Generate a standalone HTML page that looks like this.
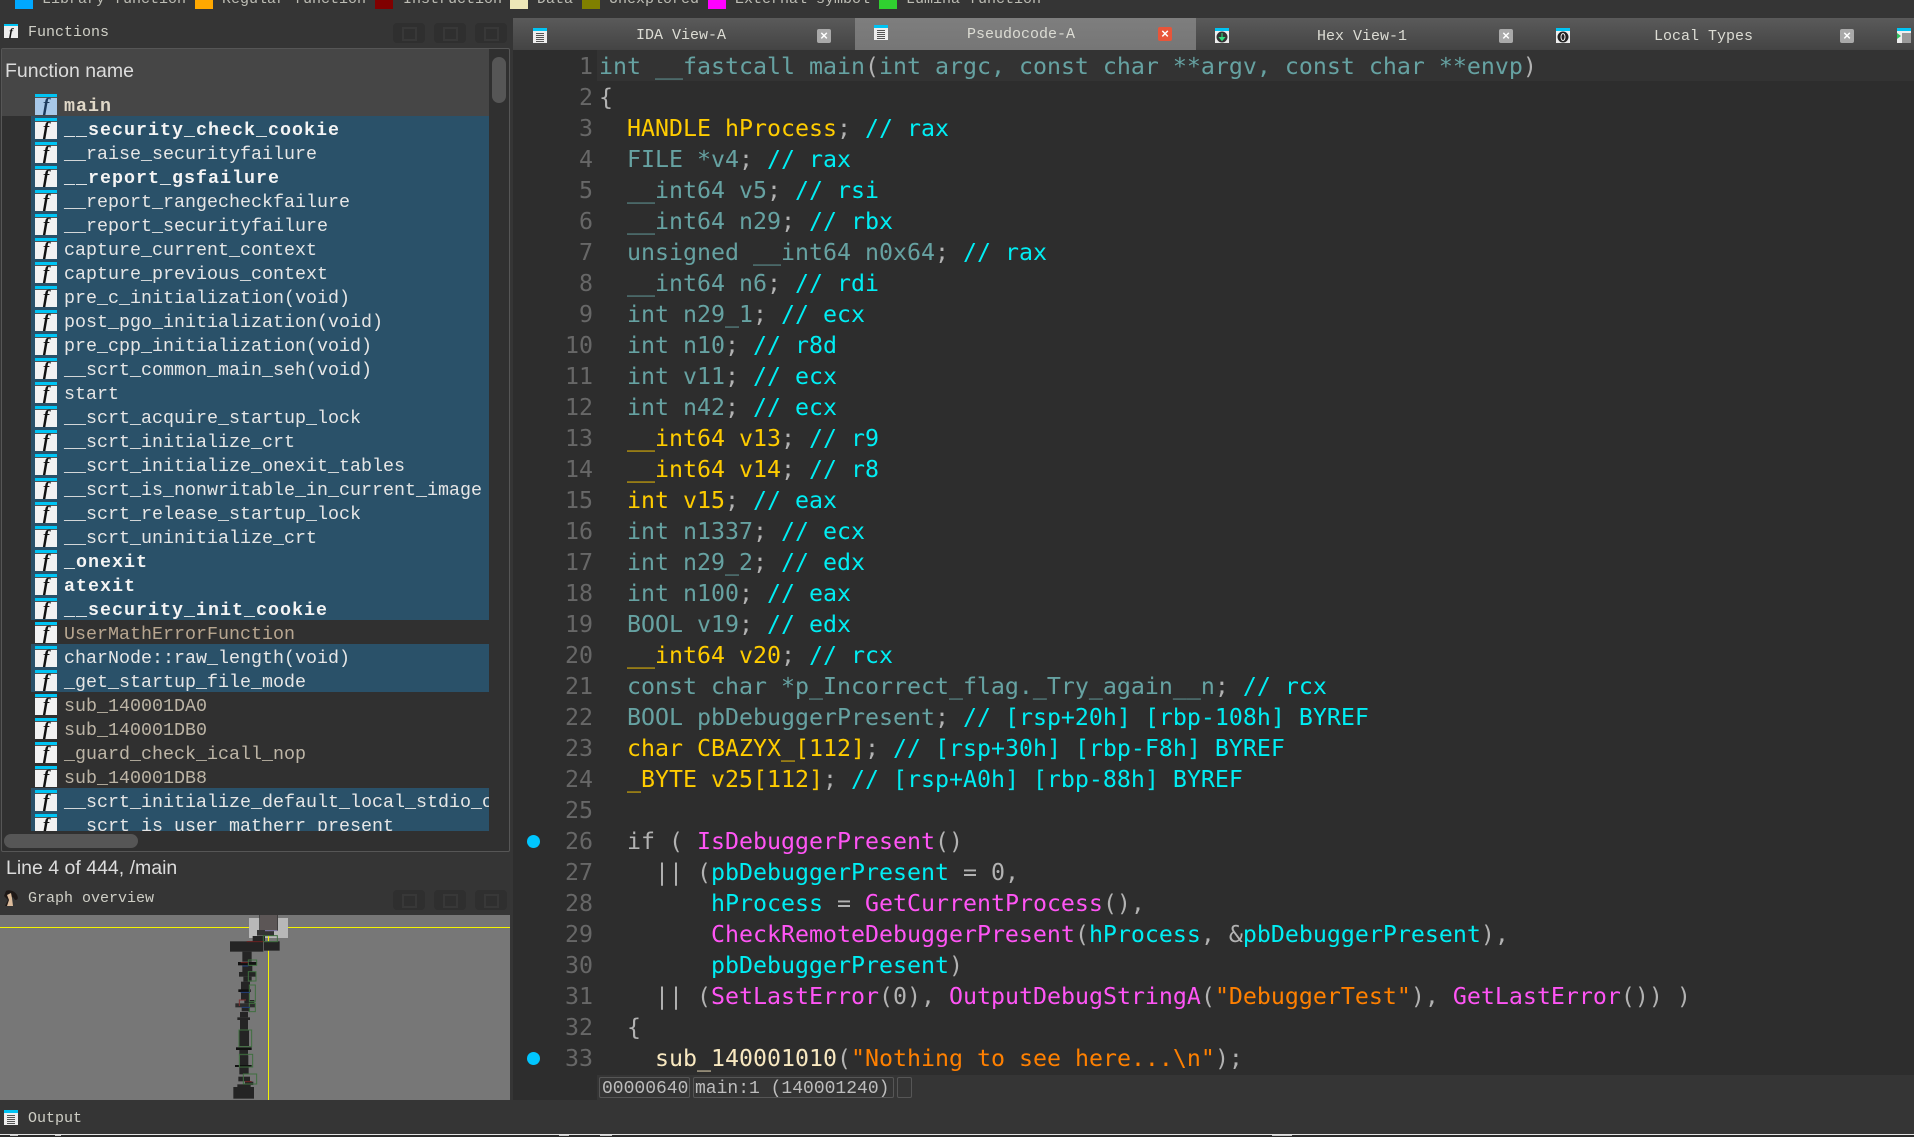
<!DOCTYPE html>
<html lang="en"><head><meta charset="utf-8"><title>IDA Pseudocode</title>
<style>
html,body{margin:0;padding:0;background:#353535;width:1914px;height:1137px;overflow:hidden}
body{position:relative;font-family:"Liberation Mono",monospace;color:#c8c8c0}
.a{position:absolute}
.sw{position:absolute;top:0;width:18px;height:9px}
.lg{position:absolute;top:-8px;font-size:15px;line-height:16px;white-space:pre;color:#bdbdb5}
.ttl{position:absolute;font-size:15px;line-height:18px;white-space:pre;color:#cfcfc6}
.tb{position:absolute;width:32px;height:20px;background:#2f2f2f;border-radius:4px}
.tb:after{content:"";position:absolute;left:9px;top:4px;width:11px;height:10px;border:2px solid #383838}
.list{position:absolute;left:2px;top:92px;width:487px;height:739px;overflow:hidden;background:#303030;font-size:18.33px}
.r{height:24px;line-height:29px;position:relative;padding-left:62px;white-space:pre;color:#bdb5a6}
.s{background:linear-gradient(#2a5169,#2a5169) 29px 0/458px 100% no-repeat;color:#e6e6e6}
.b{font-weight:bold;color:#f4f4f4;letter-spacing:1px}
.ic{position:absolute;left:33px;top:2px;width:22px;height:21px;background:#f2f2f2;border-top:3px solid #00c4f4;box-sizing:border-box;box-shadow:inset 0 1px 0 #555}
.ic i{position:absolute;left:0;right:0;top:-1px;text-align:center;font:italic bold 19px/20px "Liberation Serif",serif;color:#111;letter-spacing:0}
.m .ic{background:#a8c8e8}
.m .ic i{color:#1c3a5c}
.tab{position:absolute;top:18px;height:32px}
.tt{position:absolute;font-size:15px;line-height:18px;top:27px;color:#dcdcd4;white-space:pre}
.x{position:absolute;width:14px;height:14px;background:#a9a9a9;border-radius:2px;color:#fff;font:bold 13px/14px "Liberation Sans",sans-serif;text-align:center}
.code,.ln{position:absolute;top:51px;font-family:"DejaVu Sans Mono",monospace;font-size:23.25px;line-height:31px;white-space:pre}
.ln{left:513px;width:80px;text-align:right;color:#676767}
.code{left:599px;color:#66a2a2}
.y{color:#ffcc00}.c{color:#00eef4}.p{color:#b2b2b2}.m2{color:#ff55f5}.o{color:#ff8000}.w{color:#f8e8c0}
.dot{position:absolute;left:527px;width:13px;height:13px;border-radius:50%;background:#00c6ff}
.st{position:absolute;top:1077px;height:21px;border:1px solid #565656;border-radius:2px;box-sizing:border-box;font-size:18px;line-height:22px;padding-left:2px;white-space:pre;color:#bdbdbd}
svg{position:absolute;display:block}
</style></head><body>

<svg width="0" height="0" style="position:absolute"><defs>
<symbol id="doc" viewBox="0 0 14 15"><rect x="0" y="0" width="14" height="3" fill="#00c4f4"/><rect x="0" y="3" width="14" height="12" fill="#eee"/><rect x="3" y="5" width="8" height="9" fill="#555"/><path d="M3 6.5h8M3 8.5h8M3 10.500h8M3 12.500h8" stroke="#eee" stroke-width="1"/></symbol>
</defs></svg>

<!-- legend -->
<div class="sw" style="left:15px;background:#00a8ff"></div><div class="lg" style="left:42px">Library function</div>
<div class="sw" style="left:195px;background:#ffa800"></div><div class="lg" style="left:222px">Regular function</div>
<div class="sw" style="left:375px;background:#800000"></div><div class="lg" style="left:403px">Instruction</div>
<div class="sw" style="left:510px;background:#eee8b8"></div><div class="lg" style="left:537px">Data</div>
<div class="sw" style="left:582px;background:#808000"></div><div class="lg" style="left:609px">Unexplored</div>
<div class="sw" style="left:708px;background:#ff00ff"></div><div class="lg" style="left:735px">External symbol</div>
<div class="sw" style="left:879px;background:#30d030"></div><div class="lg" style="left:906px">Lumina function</div>

<!-- functions panel -->
<div class="a" style="left:4px;top:24px;width:14px;height:14px;background:#eee;border-top:2px solid #00c4f4;box-sizing:border-box;font:italic bold 12px/12px 'Liberation Serif',serif;color:#111;text-align:center">f</div>
<div class="ttl" style="left:28px;top:24px">Functions</div>
<div class="tb" style="left:393px;top:23px"></div><div class="tb" style="left:434px;top:23px"></div><div class="tb" style="left:475px;top:23px"></div>

<div class="a" style="left:1px;top:48px;width:509px;height:804px;border:1px solid #565656;box-sizing:border-box;background:#303030;border-radius:2px"></div>
<div class="a" style="left:2px;top:49px;width:487px;height:43px;background:#464646;font:19.500px/44px 'Liberation Sans',sans-serif;color:#dcdcdc;padding-left:3px;box-sizing:border-box">Function name</div>
<div class="a" style="left:492px;top:57px;width:14px;height:46px;background:#565656;border-radius:7px"></div>

<div class="list">
<div class="r m" style="background:#464646;color:#e0d8c8;font-weight:bold;letter-spacing:1px"><span class="ic"><i>f</i></span>main</div>
<div class="r s b"><span class="ic"><i>f</i></span>__security_check_cookie</div>
<div class="r s"><span class="ic"><i>f</i></span>__raise_securityfailure</div>
<div class="r s b"><span class="ic"><i>f</i></span>__report_gsfailure</div>
<div class="r s"><span class="ic"><i>f</i></span>__report_rangecheckfailure</div>
<div class="r s"><span class="ic"><i>f</i></span>__report_securityfailure</div>
<div class="r s"><span class="ic"><i>f</i></span>capture_current_context</div>
<div class="r s"><span class="ic"><i>f</i></span>capture_previous_context</div>
<div class="r s"><span class="ic"><i>f</i></span>pre_c_initialization(void)</div>
<div class="r s"><span class="ic"><i>f</i></span>post_pgo_initialization(void)</div>
<div class="r s"><span class="ic"><i>f</i></span>pre_cpp_initialization(void)</div>
<div class="r s"><span class="ic"><i>f</i></span>__scrt_common_main_seh(void)</div>
<div class="r s"><span class="ic"><i>f</i></span>start</div>
<div class="r s"><span class="ic"><i>f</i></span>__scrt_acquire_startup_lock</div>
<div class="r s"><span class="ic"><i>f</i></span>__scrt_initialize_crt</div>
<div class="r s"><span class="ic"><i>f</i></span>__scrt_initialize_onexit_tables</div>
<div class="r s"><span class="ic"><i>f</i></span>__scrt_is_nonwritable_in_current_image</div>
<div class="r s"><span class="ic"><i>f</i></span>__scrt_release_startup_lock</div>
<div class="r s"><span class="ic"><i>f</i></span>__scrt_uninitialize_crt</div>
<div class="r s b"><span class="ic"><i>f</i></span>_onexit</div>
<div class="r s b"><span class="ic"><i>f</i></span>atexit</div>
<div class="r s b"><span class="ic"><i>f</i></span>__security_init_cookie</div>
<div class="r" style="color:#b8a690"><span class="ic"><i>f</i></span>UserMathErrorFunction</div>
<div class="r s"><span class="ic"><i>f</i></span>charNode::raw_length(void)</div>
<div class="r s"><span class="ic"><i>f</i></span>_get_startup_file_mode</div>
<div class="r"><span class="ic"><i>f</i></span>sub_140001DA0</div>
<div class="r"><span class="ic"><i>f</i></span>sub_140001DB0</div>
<div class="r"><span class="ic"><i>f</i></span>_guard_check_icall_nop</div>
<div class="r"><span class="ic"><i>f</i></span>sub_140001DB8</div>
<div class="r s"><span class="ic"><i>f</i></span>__scrt_initialize_default_local_stdio_options</div>
<div class="r s"><span class="ic"><i>f</i></span>__scrt_is_user_matherr_present</div>
</div>
<div class="a" style="left:4px;top:834px;width:134px;height:14px;background:#565656;border-radius:7px"></div>

<div class="a" style="left:6px;top:857px;font:19.500px/22px 'Liberation Sans',sans-serif;color:#dcdcdc;white-space:pre">Line 4 of 444, /main</div>

<!-- graph overview -->
<svg style="left:3px;top:890px" width="16" height="16" viewBox="0 0 16 16"><path d="M3 1C6 -1 12 1 14 5 16 9 14 10 12 10L10 7 8 8 9 16 2 16 5 10 1 6Z" fill="#1e1816"/><path d="M4 5 8 3 9 8 10 16 4 16 6 10Z" fill="#dcbc9c"/></svg>
<div class="ttl" style="left:28px;top:890px">Graph overview</div>
<div class="tb" style="left:393px;top:890px"></div><div class="tb" style="left:434px;top:890px"></div><div class="tb" style="left:475px;top:890px"></div>

<div class="a" style="left:0;top:915px;width:510px;height:185px;background:#777"></div>
<div class="a" style="left:0;top:927px;width:510px;height:1px;background:#f4f400"></div>
<div class="a" style="left:249px;top:918px;width:39px;height:20px;background:#b8b8b8"></div>
<div class="a" style="left:268px;top:915px;width:1px;height:185px;background:#f4f400"></div>
<svg style="left:0;top:780px" width="520" height="357" viewBox="0 0 1560 1071">
<rect x="778" y="405" width="56" height="47" fill="#5c5656"/><rect x="778" y="405" width="2" height="47" fill="#333"/><rect x="832" y="405" width="2" height="47" fill="#333"/>
<g fill="#242424">
<rect x="771" y="450" width="51" height="17" fill="#333"/><rect x="758" y="468" width="37" height="17"/><rect x="690" y="484" width="100" height="31"/><rect x="792" y="484" width="47" height="28"/><rect x="727" y="515" width="28" height="30"/><rect x="714" y="546" width="56" height="10" fill="#111"/><rect x="727" y="556" width="30" height="20"/><rect x="717" y="576" width="50" height="14"/><rect x="730" y="590" width="25" height="15"/><rect x="723" y="605" width="27" height="25"/><rect x="715" y="628" width="37" height="8" fill="#111"/><rect x="723" y="636" width="25" height="24"/><rect x="733" y="660" width="30" height="10"/><rect x="706" y="670" width="60" height="12" fill="#2c2c2c"/><rect x="725" y="682" width="25" height="12"/><rect x="720" y="696" width="24" height="16"/><rect x="712" y="712" width="38" height="8"/><rect x="720" y="720" width="24" height="30"/><rect x="717" y="750" width="30" height="48"/><rect x="708" y="802" width="47" height="8" fill="#111"/><rect x="718" y="810" width="26" height="16"/><rect x="720" y="826" width="25" height="30"/><rect x="705" y="855" width="50" height="6" fill="#111"/><rect x="718" y="861" width="28" height="22"/><rect x="715" y="890" width="35" height="14"/><rect x="735" y="905" width="25" height="10"/><rect x="712" y="913" width="40" height="8"/><rect x="700" y="921" width="62" height="35"/>
</g>
<g fill="none" stroke="#3f6f3f" stroke-width="3">
<rect x="745" y="540" width="25" height="16"/><rect x="745" y="575" width="23" height="28"/><rect x="748" y="615" width="18" height="50"/><rect x="748" y="670" width="18" height="25"/><rect x="717" y="750" width="38" height="50"/><rect x="718" y="823" width="40" height="38"/><rect x="730" y="882" width="40" height="30"/><rect x="790" y="467" width="42" height="18"/>
</g>
<g fill="none" stroke-width="3"><path d="M740 485H790M722 548H745M735 905H755" stroke="#6a2020"/><path d="M727 558H745M722 637H750M725 682H750" stroke="#22407a"/><path d="M718 678V660H738" stroke="#803030"/><path d="M795 452H832" stroke="#8a80b0"/></g>
</svg>

<div class="a" style="left:4px;top:1110px;width:14px;height:15px"><svg width="14" height="15"><use href="#doc"/></svg></div>
<div class="ttl" style="left:28px;top:1110px">Output</div>

<!-- tabs -->
<div class="tab" style="left:513px;width:1401px;background:linear-gradient(#5a5a5a,#444)"></div>
<div class="tab" style="left:855px;width:341px;background:linear-gradient(#7e7e7e,#767676)"></div>
<svg style="left:533px;top:28px" width="14" height="15"><use href="#doc"/></svg>
<div class="tt" style="left:636px">IDA View-A</div>
<div class="x" style="left:817px;top:29px">×</div>
<svg style="left:874px;top:25px" width="14" height="15"><use href="#doc"/></svg>
<div class="tt" style="left:967px;top:26px">Pseudocode-A</div>
<div class="x" style="left:1158px;top:27px;background:#e8553a;border-radius:2px">×</div>
<svg style="left:1215px;top:28px" width="14" height="15" viewBox="0 0 14 15"><rect width="14" height="3" fill="#00c4f4"/><rect y="3" width="14" height="12" fill="#eee"/><circle cx="7" cy="9" r="5.500" fill="#333"/><path d="M7 5v7M4.500 9.500 7 12.500 9.500 9.500Z" stroke="#30e080" fill="#30e080"/></svg>
<div class="tt" style="left:1317px;top:28px">Hex View-1</div>
<div class="x" style="left:1499px;top:29px">×</div>
<svg style="left:1556px;top:28px" width="14" height="15" viewBox="0 0 14 15"><rect width="14" height="3" fill="#00c4f4"/><rect y="3" width="14" height="12" fill="#eee"/><circle cx="7" cy="9" r="5.500" fill="#222"/><ellipse cx="7" cy="9" rx="2" ry="3.500" fill="none" stroke="#eee"/></svg>
<div class="tt" style="left:1654px;top:28px">Local Types</div>
<div class="x" style="left:1840px;top:29px">×</div>
<svg style="left:1897px;top:28px" width="14" height="15" viewBox="0 0 14 15"><rect width="14" height="3" fill="#00c4f4"/><rect y="3" width="14" height="12" fill="#eee"/><path d="M0 5 4 8 0 11Z" fill="#30c060"/><path d="M5 6h9M5 8h9M5 10h9M5 12h9M5 14h9" stroke="#444"/></svg>

<!-- editor -->
<div class="a" style="left:513px;top:50px;width:84px;height:1050px;background:#2d2d2d"></div>
<div class="a" style="left:597px;top:50px;width:1317px;height:1025px;background:#2d2d2d"></div>
<div class="a" style="left:597px;top:50px;width:1317px;height:31px;background:#333"></div>

<div class="ln">1
2
3
4
5
6
7
8
9
10
11
12
13
14
15
16
17
18
19
20
21
22
23
24
25
26
27
28
29
30
31
32
33</div>
<div class="dot" style="top:835px"></div>
<div class="dot" style="top:1052px"></div>

<div class="code">int __fastcall main<span class="p">(</span>int argc, const char **argv, const char **envp<span class="p">)</span>
<span class="p">{</span>
  <span class="y">HANDLE hProcess</span><span class="p">;</span> <span class="c">// rax</span>
  FILE *v4<span class="p">;</span> <span class="c">// rax</span>
  __int64 v5<span class="p">;</span> <span class="c">// rsi</span>
  __int64 n29<span class="p">;</span> <span class="c">// rbx</span>
  unsigned __int64 n0x64<span class="p">;</span> <span class="c">// rax</span>
  __int64 n6<span class="p">;</span> <span class="c">// rdi</span>
  int n29_1<span class="p">;</span> <span class="c">// ecx</span>
  int n10<span class="p">;</span> <span class="c">// r8d</span>
  int v11<span class="p">;</span> <span class="c">// ecx</span>
  int n42<span class="p">;</span> <span class="c">// ecx</span>
  <span class="y">__int64 v13</span><span class="p">;</span> <span class="c">// r9</span>
  <span class="y">__int64 v14</span><span class="p">;</span> <span class="c">// r8</span>
  <span class="y">int v15</span><span class="p">;</span> <span class="c">// eax</span>
  int n1337<span class="p">;</span> <span class="c">// ecx</span>
  int n29_2<span class="p">;</span> <span class="c">// edx</span>
  int n100<span class="p">;</span> <span class="c">// eax</span>
  BOOL v19<span class="p">;</span> <span class="c">// edx</span>
  <span class="y">__int64 v20</span><span class="p">;</span> <span class="c">// rcx</span>
  const char *p_Incorrect_flag._Try_again__n<span class="p">;</span> <span class="c">// rcx</span>
  BOOL pbDebuggerPresent<span class="p">;</span> <span class="c">// [rsp+20h] [rbp-108h] BYREF</span>
  <span class="y">char CBAZYX_[112]</span><span class="p">;</span> <span class="c">// [rsp+30h] [rbp-F8h] BYREF</span>
  <span class="y">_BYTE v25[112]</span><span class="p">;</span> <span class="c">// [rsp+A0h] [rbp-88h] BYREF</span>

<span class="p">  if ( </span><span class="m2">IsDebuggerPresent</span><span class="p">()</span>
<span class="p">    || (</span><span class="c">pbDebuggerPresent</span><span class="p"> = 0,</span>
        <span class="c">hProcess</span><span class="p"> = </span><span class="m2">GetCurrentProcess</span><span class="p">(),</span>
        <span class="m2">CheckRemoteDebuggerPresent</span><span class="p">(</span><span class="c">hProcess</span><span class="p">, &amp;</span><span class="c">pbDebuggerPresent</span><span class="p">),</span>
        <span class="c">pbDebuggerPresent</span><span class="p">)</span>
<span class="p">    || (</span><span class="m2">SetLastError</span><span class="p">(0), </span><span class="m2">OutputDebugStringA</span><span class="p">(</span><span class="o">"DebuggerTest"</span><span class="p">), </span><span class="m2">GetLastError</span><span class="p">()) )</span>
<span class="p">  {</span>
    <span class="w">sub_140001010</span><span class="p">(</span><span class="o">"Nothing to see here...\n"</span><span class="p">);</span></div>

<!-- status -->
<div class="st" style="left:599px;width:91px;font-size:18px">00000640</div>
<div class="st" style="left:693px;width:201px;padding-left:1px">main:1 (140001240)</div>
<div class="st" style="left:897px;width:15px"></div>

<!-- bottom line -->
<div class="a" style="left:0;top:1134px;width:1914px;height:1px;background:#e4e4e4"></div>
<div class="a" style="left:0;top:1135px;width:1914px;height:2px;background:#2b2b2b"></div>
<div class="a" style="left:10px;top:1135px;width:8px;height:1px;background:#ccc"></div>
<div class="a" style="left:55px;top:1135px;width:6px;height:1px;background:#ccc"></div>
<div class="a" style="left:559px;top:1135px;width:10px;height:1px;background:#ccc"></div>
<div class="a" style="left:600px;top:1135px;width:12px;height:1px;background:#ccc"></div>
<div class="a" style="left:1272px;top:1135px;width:20px;height:1px;background:#ccc"></div>
</body></html>
